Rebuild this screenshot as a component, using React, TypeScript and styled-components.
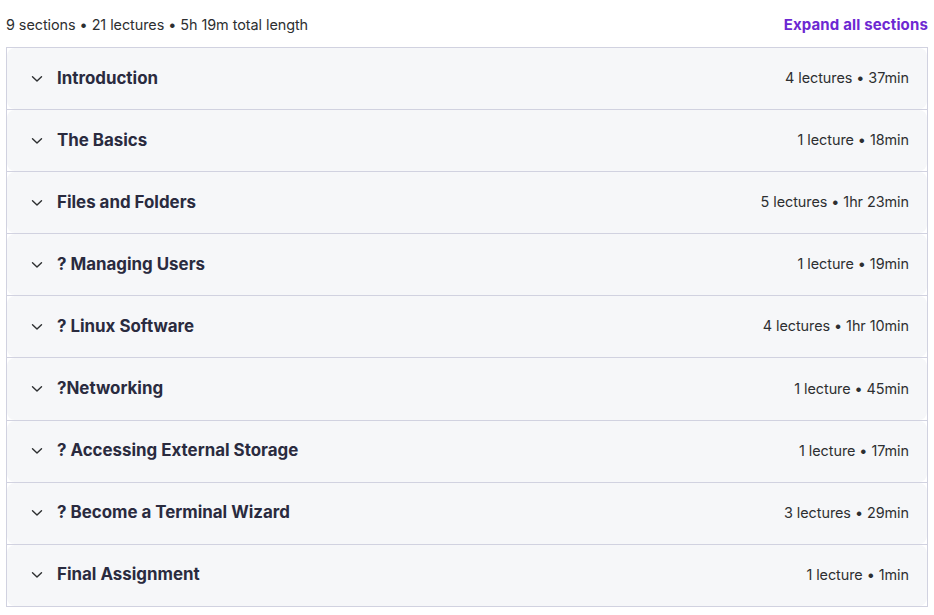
import React from 'react'
import styled, { createGlobalStyle } from 'styled-components'

interface Section {
  title: string
  meta: string
}

const sections: Section[] = [
  { title: 'Introduction', meta: '4 lectures • 37min' },
  { title: 'The Basics', meta: '1 lecture • 18min' },
  { title: 'Files and Folders', meta: '5 lectures • 1hr 23min' },
  { title: '? Managing Users', meta: '1 lecture • 19min' },
  { title: '? Linux Software', meta: '4 lectures • 1hr 10min' },
  { title: '?Networking', meta: '1 lecture • 45min' },
  { title: '? Accessing External Storage', meta: '1 lecture • 17min' },
  { title: '? Become a Terminal Wizard', meta: '3 lectures • 29min' },
  { title: 'Final Assignment', meta: '1 lecture • 1min' },
]

const Chevron: React.FC = () => (
  <svg width="12" height="8" viewBox="0 0 12 8" fill="none">
    <path d="M1.5 1.8 L6 6 L10.5 1.8" stroke="#2d2f31" strokeWidth="1.4" strokeLinecap="round" strokeLinejoin="round" />
  </svg>
)

const App: React.FC = () => (
  <>
    <GlobalStyle />
    <Page>
      <Summary>
        <Stats>9 sections • 21 lectures • 5h 19m total length</Stats>
        <ExpandButton>Expand all sections</ExpandButton>
      </Summary>
      <Accordion>
        {sections.map((s) => (
          <Row key={s.title}>
            <Panel>
              <TitleGroup>
                <IconSlot>
                  <Chevron />
                </IconSlot>
                <Title>{s.title}</Title>
              </TitleGroup>
              <Meta>{s.meta}</Meta>
            </Panel>
          </Row>
        ))}
      </Accordion>
    </Page>
  </>
)

const GlobalStyle = createGlobalStyle`
  body {
    margin: 0;
    background: #fff;
    font-family: Inter, "Noto Sans", sans-serif;
    color: #2d2f31;
  }
`

const Page = styled.div`
  padding: 12px 6px 0 6px;
  width: 922px;
`

const Summary = styled.div`
  display: flex;
  justify-content: space-between;
  align-items: center;
  height: 24px;
  margin-bottom: 11px;
`

const Stats = styled.span`
  font-size: 14.4px;
  color: #2d2f31;
  letter-spacing: -0.05px;
`

const ExpandButton = styled.button`
  border: none;
  background: none;
  padding: 0;
  font-family: inherit;
  font-size: 15px;
  font-weight: 700;
  color: #6d28d2;
  letter-spacing: 0.15px;
  cursor: pointer;
`

const Accordion = styled.div`
  border: 1px solid #d1d2e0;
  border-bottom: none;
`

const Row = styled.div`
  border-bottom: 1px solid #d1d2e0;
  background: #fff;
`

const Panel = styled.div`
  display: flex;
  align-items: center;
  justify-content: space-between;
  height: 61.1px;
  padding: 0 18px 2px 24px;
  box-sizing: border-box;
  background: #f6f7f9;
  border-radius: 8px;
`

const TitleGroup = styled.div`
  display: flex;
  align-items: center;
  gap: 14px;
`

const IconSlot = styled.span`
  display: flex;
  width: 12px;
  justify-content: center;
  padding-top: 2px;
`

const Title = styled.h3`
  margin: 0;
  font-size: 16.9px;
  font-weight: 700;
  color: #2a2b3f;
  letter-spacing: 0;
`

const Meta = styled.span`
  font-size: 14.4px;
  color: #2d2f31;
  letter-spacing: -0.05px;
`

export default App
